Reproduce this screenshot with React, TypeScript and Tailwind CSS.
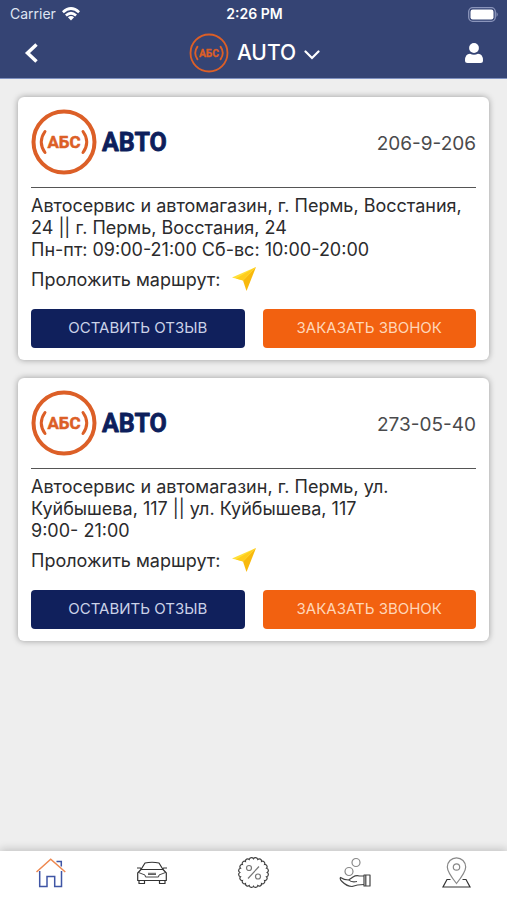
import React from "react";

const branches = [
  {
    phone: "206-9-206",
    lines: [
      "Автосервис и автомагазин, г. Пермь, Восстания,",
      "24 || г. Пермь, Восстания, 24",
      "Пн-пт: 09:00-21:00 Сб-вс: 10:00-20:00",
    ],
  },
  {
    phone: "273-05-40",
    lines: [
      "Автосервис и автомагазин, г. Пермь, ул.",
      "Куйбышева, 117 || ул. Куйбышева, 117",
      "9:00- 21:00",
    ],
  },
];

function LogoMark({ className, ring }: { className: string; ring: number }) {
  return (
    <svg viewBox="0 0 66 66" className={className} fill="none" stroke="#dc5f27" aria-hidden="true">
      <circle cx="33" cy="33" r="30.5" strokeWidth={ring} />
      <path d="M14 22.5Q6.500 33 14 43.500M52 22.500Q59.500 33 52 43.500" strokeWidth="3" strokeLinecap="round" />
      <text
        x="33"
        y="39"
        textAnchor="middle"
        fontSize="17"
        fill="#dc5f27"
        strokeWidth="0.5"
        strokeLinejoin="round"
        className="font-['Roboto','Liberation_Sans',sans-serif] font-bold"
      >
        АБС
      </text>
    </svg>
  );
}

function StatusBar() {
  return (
    <div className="grid h-7 grid-cols-3 items-center pr-2 pl-2.5 text-sm">
      <div className="flex items-center gap-1.5">
        <span className="text-[#dfe4f2]">Carrier</span>
        <svg viewBox="0 0 18 14" className="h-3.5 w-[18px]" fill="none" stroke="white" strokeWidth="2.700" aria-hidden="true">
          <path d="M0.900 5.200Q9-2.200 17.100 5.200" />
          <path d="M3.900 8.500Q9 4 14.100 8.500" />
          <path d="M9 13.500L5.900 10.300Q9 7.800 12.100 10.300Z" fill="white" stroke="none" />
        </svg>
      </div>
      <span className="text-center font-semibold">2:26 PM</span>
      <svg viewBox="0 0 31 15" className="h-[15px] w-[31px] justify-self-end" aria-hidden="true">
        <rect x="0.700" y="0.700" width="26.600" height="13.600" rx="4" fill="none" stroke="#8b95bb" strokeWidth="1.300" />
        <rect x="2.500" y="2.500" width="23" height="10" rx="2.200" fill="white" />
        <path d="M28.500 5Q31 7.500 28.500 10Z" fill="#8b95bb" />
      </svg>
    </div>
  );
}

function BranchCard({ phone, lines }: { phone: string; lines: string[] }) {
  return (
    <article className="rounded-md bg-white px-[13px] py-3 shadow-[0_0_6px_rgba(0,0,0,0.35)]">
      <div className="flex items-center justify-between border-b border-[#555] pb-3">
        <div className="flex items-center gap-1">
          <LogoMark className="size-[66px]" ring={4} />
          <svg viewBox="0 0 72 30" className="h-[30px] w-[72px]" role="img" aria-label="АВТО">
            <text
              x="1"
              y="23.500"
              fontSize="25"
              fill="#0d1f5c"
              stroke="#0d1f5c"
              strokeWidth="0.8"
              strokeLinejoin="round"
              className="font-['Roboto','Liberation_Sans',sans-serif] font-bold"
            >
              АВТО
            </text>
          </svg>
        </div>
        <a href="#call" className="pt-1 text-[19px] text-[#4a4a4c]">
          {phone}
        </a>
      </div>

      <p className="pt-[7px] text-[18px] leading-[22px]">
        {lines.map((line) => (
          <span key={line} className="block whitespace-nowrap">
            {line}
          </span>
        ))}
      </p>

      <a href="#route" className="mt-1 flex h-7 items-center gap-3 text-[18px]">
        Проложить маршрут:
        <svg viewBox="0 0 24 24" className="size-6" aria-hidden="true">
          <path d="M24 0L0 10.500L11 13.500Z" fill="#ffdf38" />
          <path d="M24 0L11 13.500L14.500 24Z" fill="#f8b90c" />
          <path d="M24 0L4 11.600L11 13.500Z" fill="#ffcd1c" />
        </svg>
      </a>

      <div className="mt-4 grid grid-cols-2 gap-[18px] text-[15px]">
        <button type="button" className="h-[39px] rounded bg-[#10205c] text-[#cbd2e8]">
          ОСТАВИТЬ ОТЗЫВ
        </button>
        <button type="button" className="h-[39px] rounded bg-[#f26110] text-[#ffd6b8]">
          ЗАКАЗАТЬ ЗВОНОК
        </button>
      </div>
    </article>
  );
}

function HomeIcon() {
  return (
    <svg viewBox="0 0 30 30" className="size-[30px]" fill="none" strokeWidth="1.500" aria-hidden="true">
      <path d="M3.700 13V28.500H11V18.500H18.700V28.500H25.500V13M20.500 3.500H25.300V8.500" stroke="#3f55a5" />
      <path d="M0.500 14L14.700 1.200L29.300 14" stroke="#ee8850" />
    </svg>
  );
}

function CarIcon() {
  return (
    <svg viewBox="0 0 32 24" className="h-6 w-8" fill="none" stroke="#333" strokeWidth="1.200" strokeLinejoin="round" aria-hidden="true">
      <path d="M5 8.500L9 2Q16 0.500 23 2L27 8.500" />
      <path d="M5 8.500H27L30.300 12V19.500H1.700V12Z" />
      <path d="M1 7H4.500L5.500 8.500M31 7H27.500L26.500 8.500" />
      <path d="M2.500 11.500L9 14L9.500 16H22.500L23 14L29.500 11.500" strokeWidth="0.900" />
      <path d="M12 12.300H20M12 13.500H20" strokeWidth="0.800" />
      <path d="M3 19.500V22.500H8.500V19.500M23.500 19.500V22.500H29V19.500" />
    </svg>
  );
}

// scalloped edge of the discount badge
const badgeEdge = Array.from({ length: 20 }, (_, i) => {
  const a = (i * Math.PI) / 10;
  const x = 15.500 + 13.700 * Math.cos(a);
  const y = 15.500 + 13.700 * Math.sin(a);
  return i === 0 ? `M${x} ${y}` : `A2.300 2.300 0 0 1 ${x} ${y}`;
}).join("") + "A2.300 2.300 0 0 1 29.200 15.500Z";

function DiscountIcon() {
  return (
    <svg viewBox="0 0 31 31" className="size-[31px]" fill="none" stroke="#444" strokeWidth="1.200" aria-hidden="true">
      <path d={badgeEdge} />
      <g stroke="#777">
        <circle cx="11" cy="11" r="2.500" />
        <circle cx="20" cy="19.500" r="2.500" />
        <path d="M21 9.500L10 21.500" />
      </g>
    </svg>
  );
}

function BonusIcon() {
  return (
    <svg viewBox="0 0 32 31" className="h-[31px] w-8" fill="none" stroke="#444" strokeWidth="1.200" strokeLinejoin="round" aria-hidden="true">
      <g stroke="#888">
        <circle cx="17" cy="5.500" r="4" />
        <circle cx="10" cy="14.500" r="4" />
      </g>
      <path d="M25 19H20.500Q17 18 14 20Q12 21.500 9.500 23Q5 23 1.500 20.500Q0.500 22 3 24.500Q8 29.500 13 29.500Q18 27.500 25 27.500" />
      <path d="M10 23Q12 25.500 18 24.500" />
      <path d="M25 18H31V29H25ZM26.800 18V29" />
    </svg>
  );
}

function MapIcon() {
  return (
    <svg viewBox="0 0 29 31" className="h-[31px] w-[29px]" fill="none" strokeWidth="1.200" aria-hidden="true">
      <path d="M8.500 22.500H5L1 30H28L24 22.500H20.500" stroke="#333" />
      <path d="M14.500 26.500Q5.300 15 5.300 10A9.200 9.200 0 0 1 23.700 10Q23.700 15 14.500 26.500Z" stroke="#888" />
      <circle cx="14.500" cy="10" r="3.200" stroke="#888" />
    </svg>
  );
}

const tabs = [
  { href: "#home", label: "Главная", icon: <HomeIcon /> },
  { href: "#car", label: "Автомобиль", icon: <CarIcon /> },
  { href: "#discounts", label: "Скидки", icon: <DiscountIcon /> },
  { href: "#bonus", label: "Бонусы", icon: <BonusIcon /> },
  { href: "#map", label: "Карта", icon: <MapIcon /> },
];

export default function App() {
  return (
    <div className="flex min-h-screen flex-col bg-[#eeeeee] font-['Inter','Liberation_Sans',sans-serif] text-[#2b2b2d]">
      <header className="border-b border-[#7f91c0] bg-[#354474] text-white">
        <StatusBar />
        <div className="flex h-[50px] items-center justify-between px-6">
          <button type="button" aria-label="Назад" className="w-5">
            <svg viewBox="0 0 14 20" className="h-5 w-3.5" fill="none" stroke="white" strokeWidth="3.500" aria-hidden="true">
              <path d="M12.500 1.500L3.500 10L12.500 18.500" />
            </svg>
          </button>
          <button type="button" className="flex items-center gap-2 text-[21px] font-medium">
            <LogoMark className="size-10" ring={3} />
            AUTO
            <svg viewBox="0 0 16 10" className="mt-1 h-2.5 w-4" fill="none" stroke="white" strokeWidth="2.200" strokeLinecap="round" aria-hidden="true">
              <path d="M1.500 1.500L8 8L14.500 1.500" />
            </svg>
          </button>
          <button type="button" aria-label="Профиль">
            <svg viewBox="0 0 18 20" className="h-5 w-[18px]" fill="white" aria-hidden="true">
              <circle cx="9" cy="5" r="4.900" />
              <path d="M0 17.500Q0 11 5 10.800Q9 12.800 13 10.800Q18 11 18 17.500Q18 20 15.500 20H2.500Q0 20 0 17.500Z" />
            </svg>
          </button>
        </div>
      </header>

      <main className="flex flex-1 flex-col gap-[18px] px-[18px] pt-[18px] pb-6">
        {branches.map((branch) => (
          <BranchCard key={branch.phone} {...branch} />
        ))}
      </main>

      <nav className="grid h-[49px] grid-cols-5 bg-white pb-1.5 shadow-[0_-2px_8px_rgba(0,0,0,0.18)]">
        {tabs.map((tab) => (
          <a key={tab.href} href={tab.href} aria-label={tab.label} className="flex items-center justify-center">
            {tab.icon}
          </a>
        ))}
      </nav>
    </div>
  );
}
